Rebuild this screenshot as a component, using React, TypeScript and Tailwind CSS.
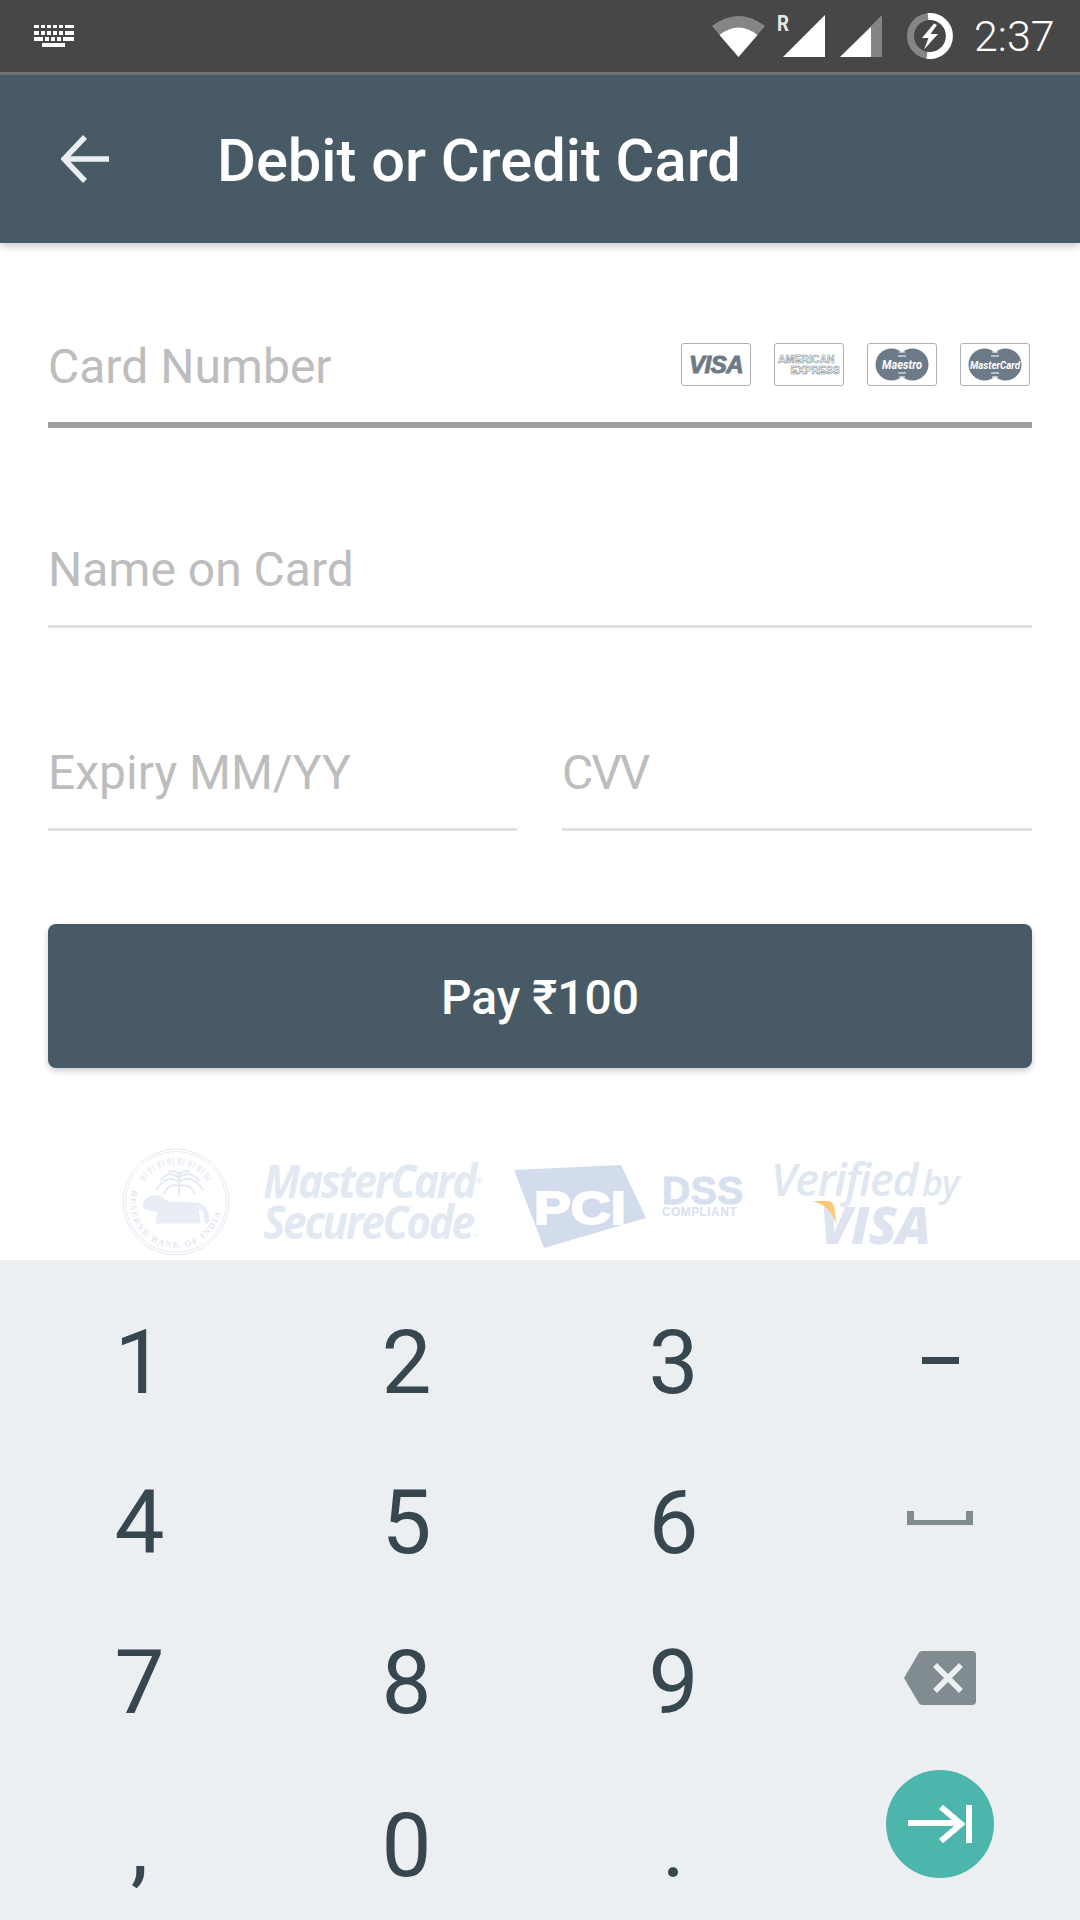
import React from "react";

const CardIcon = ({ children }: { children: React.ReactNode }) => (
  <div className="w-[70px] h-[43px] border border-[#aab1b8] rounded-[3px] flex items-center justify-center bg-white overflow-hidden">
    {children}
  </div>
);

const Circles = ({ label, size, len }: { label: string; size: number; len: number }) => (
  <svg width="54" height="33" viewBox="0 0 54 33">
    <circle cx="16.5" cy="16.5" r="16" fill="#6d7a87" />
    <circle cx="37.5" cy="16.5" r="16" fill="#6d7a87" />
    <path d="M24 4h6M23 8h8M23 25h8M24 29h6" stroke="#fff" strokeWidth="1" />
    <text x="27" y="21" textAnchor="middle" fontSize={size} textLength={len} lengthAdjust="spacingAndGlyphs" fontWeight="700" fontStyle="italic" fill="#fff" fontFamily="Roboto, sans-serif">{label}</text>
  </svg>
);

const Field = ({ label, className, line, text = "" }: { label: string; className: string; line: string; text?: string }) => (
  <div className={className}>
    <div className={`text-[48px] leading-[62px] text-[#bdbdbd] font-['Roboto',sans-serif] ${text}`}>{label}</div>
    <div className={line} />
  </div>
);

const Digit = ({ children, dy = "pt-[5px]" }: { children: React.ReactNode; dy?: string }) => (
  <div className={`flex items-center justify-center h-[160px] text-[89px] leading-none text-[#37474f] font-['Roboto',sans-serif] ${dy}`}>
    {children}
  </div>
);

export default function App() {
  return (
    <div className="w-[1080px] h-[1920px] bg-white flex flex-col overflow-hidden font-['Roboto',sans-serif]">
      {/* status bar */}
      <div className="h-[75px] shrink-0 bg-[#474747] border-b-[3px] border-[#757575] flex items-center pl-[33px] pr-[25px]">
        <svg width="42" height="22" viewBox="0 0 42 22" fill="#fff" className="mt-[-1px]">
          <path d="M1 0h5v3H1zM8 0h4v3H8zM14 0h4v3h-4zM20 0h4v3h-4zM26 0h4v3h-4zM32 0h9v3h-9z" />
          <path d="M1 6h5v4H1zM8 6h4v4H8zM14 6h4v4h-4zM20 6h4v4h-4zM26 6h4v4h-4zM32 6h9v4h-9z" />
          <path d="M1 12h9v4H1zM12 12h4v4h-4zM18 12h4v4h-4zM24 12h4v4h-4zM30 12h11v4H30z" />
          <path d="M9 18h23v4H9z" />
        </svg>
        <div className="flex-1" />
        <svg width="53" height="44" viewBox="0 0 53 44" className="mr-[18px]">
          <path d="M0 12 Q26.5 -8 53 12 L26.5 43Z" fill="#858585" />
          <path d="M7.5 21 Q26.5 6 45.5 21 L26.5 43Z" fill="#fff" />
        </svg>
        <div className="relative w-[42px] h-[42px] mr-[15px]">
          <span className="absolute left-[-6px] top-[-2px] text-[22px] leading-[22px] font-bold text-[#e8e8e8] scale-x-[0.85] origin-left">R</span>
          <svg width="42" height="42" viewBox="0 0 42 42"><path d="M42 0V42H0Z" fill="#fff" /></svg>
        </div>
        <svg width="42" height="42" viewBox="0 0 42 42" className="mr-[25px]">
          <path d="M42 0V42H0Z" fill="#858585" />
          <path d="M31 12V42H0Z" fill="#fff" />
        </svg>
        <svg width="46" height="46" viewBox="0 0 46 46" className="mr-[21px]">
          <circle cx="23" cy="23" r="19.5" fill="none" stroke="#858585" strokeWidth="7" />
          <path d="M21 3.6A19.5 19.5 0 1 1 20 42.3" fill="none" stroke="#fff" strokeWidth="7" />
          <path d="M27 10.5L15 25h6.5l-4.5 11.5L31 21h-7.5l6.5-9z" fill="#fff" />
        </svg>
        <span className="text-[43px] leading-none font-light text-white w-[81px]">2:37</span>
      </div>

      {/* app bar */}
      <div className="h-[168px] shrink-0 bg-[#475a65] flex items-center pl-[61px] shadow-[0_3px_8px_rgba(0,0,0,0.22)] relative">
        <svg width="48" height="48" viewBox="0 0 48 48" fill="none" stroke="#eceff1" strokeWidth="5.5" className="mr-[108px]">
          <path d="M48 24H4M24 2L3 24l21 22" />
        </svg>
        <span className="text-[59.6px] leading-none font-medium text-white pt-[6px]">Debit or Credit Card</span>
      </div>

      {/* form */}
      <div className="flex-1 px-[48px] pt-[93px]">
        <div className="relative">
          <Field label="Card Number" className="h-[92px]" line="h-[6px] bg-[#9e9e9e] mt-[24px]" />
          <div className="absolute right-[2px] top-[7px] flex gap-[23px]">
            <CardIcon>
              <span className="text-[24px] leading-none font-bold italic text-[#6d7a87] font-['Liberation_Sans',sans-serif] tracking-[-0.5px] [-webkit-text-stroke:1px_#6d7a87]">VISA</span>
            </CardIcon>
            <CardIcon>
              <div className="text-white [-webkit-text-stroke:0.5px_#6d7a87] text-[10.5px] leading-[11px] font-bold font-['Liberation_Sans',sans-serif] w-[62px]">
                <div className="text-left whitespace-nowrap">AMERICAN</div>
                <div className="text-right whitespace-nowrap">EXPRESS</div>
              </div>
            </CardIcon>
            <CardIcon><Circles label="Maestro" size={13} len={40} /></CardIcon>
            <CardIcon><Circles label="MasterCard" size={11} len={50} /></CardIcon>
          </div>
        </div>

        <Field label="Name on Card" className="mt-[111px]" line="h-[3px] bg-[#e0e0e0] mt-[24px]" />

        <div className="flex gap-[45px] mt-[114px]">
          <Field label="Expiry MM/YY" className="w-[469px] shrink-0" line="h-[3px] bg-[#e0e0e0] mt-[24px]" />
          <Field label="CVV" text="tracking-[-2px]" className="flex-1" line="h-[3px] bg-[#e0e0e0] mt-[24px]" />
        </div>

        <button className="mt-[93px] w-full h-[144px] rounded-[8px] bg-[#475a65] text-white text-[48px] font-medium flex items-center justify-center pt-[3px] shadow-[0_3px_6px_rgba(0,0,0,0.2)]">
          Pay ₹100
        </button>

        {/* trust logos */}
        <div className="mt-[80px] -mx-[48px] h-[112px] flex items-start pl-[122px]">
          <svg width="108" height="108" viewBox="0 0 108 108" fill="none" stroke="#e6ebf3" className="shrink-0">
            <circle cx="54" cy="54" r="53" strokeWidth="1" />
            <circle cx="54" cy="54" r="50.5" strokeWidth="1" />
            <defs><path id="rbiArc" d="M9.6 42A46 46 0 1 0 98.4 42" /></defs>
            <path d="M20 32A40 40 0 0 1 88 32" strokeWidth="7" strokeDasharray="4 1.5 2 3" stroke="#eef1f6" />
            <text fontSize="9" fontWeight="700" fill="#e2e7f0" stroke="none" fontFamily="'Liberation Serif', serif" letterSpacing="1.6">
              <textPath href="#rbiArc">RESERVE BANK OF INDIA</textPath>
            </text>
            <path d="M57 24v24M57 34C50 28 42 30 34 42M57 34C64 28 73 30 81 42M57 30C50 24 44 25 38 33M57 30C64 24 71 25 77 33M57 27C54 23 50 22 46 24M57 27C60 23 65 22 68 24M57 38C50 36 45 38 42 46M57 38C64 36 70 38 73 46" strokeWidth="2" />
            <path d="M21 58c1-9 11-13 18-9 3 2 5 5 8 5 10 1 22 0 30 2 7 2 11 8 9 19h-3l-1-11c-2-2-4-3-6-3l2 14H34l2-12c-5 0-13-1-15-5z" fill="#e9edf5" strokeWidth="1" />
            <path d="M28 55h6M50 60v10M56 60v10M62 60v10M68 60v10" strokeWidth="1.5" />
          </svg>
          <div className="ml-[33px] mt-[12px] w-[224px] shrink-0 font-['Open_Sans',sans-serif] italic font-bold text-[#e3e9f2] text-[46px] leading-[41px] tracking-[-2.5px] scale-x-[0.92] origin-left">
            <div>MasterCard<span className="text-[9px] not-italic align-top tracking-normal">®</span></div>
            <div>SecureCode<span className="text-[7px] not-italic tracking-normal">™</span></div>
          </div>
          <svg width="133" height="84" viewBox="0 0 133 84" className="ml-[27px] mt-[17px] shrink-0">
            <path d="M0 5L107 0l25 53L30 83Z" fill="#d2dcec" />
            <text x="20" y="59" fontSize="46" fontWeight="900" fill="#fff" fontFamily="'Liberation Sans', sans-serif" stroke="#fff" strokeWidth="2" textLength="92" lengthAdjust="spacingAndGlyphs">PCI</text>
          </svg>
          <div className="ml-[15px] mt-[26px] w-[80px] shrink-0 font-['Liberation_Sans',sans-serif] font-bold text-[#d7e0ee]">
            <div className="text-[39px] leading-[33px] tracking-[0.5px] [-webkit-text-stroke:1px_#d7e0ee]">DSS</div>
            <div className="text-[12px] leading-[10px] tracking-[0.4px]">COMPLIANT</div>
          </div>
          <div className="ml-[29px] mt-[9px] shrink-0 w-[190px] relative">
            <div className="font-['Open_Sans',sans-serif] italic font-semibold text-[#e0e7f1] text-[45px] leading-[43px] tracking-[-1.5px] whitespace-nowrap">Verified<span className="text-[36px] ml-[5px]">by</span></div>
            <div className="font-['Open_Sans',sans-serif] italic font-extrabold text-[#dde4ef] text-[52px] leading-[40px] tracking-[-1px] pl-[49px]">VISA</div>
            <svg width="24" height="26" viewBox="0 0 24 26" className="absolute left-[42px] top-[44px]">
              <path d="M0 0h15c3 0 5 2 6 5l3 20C20 10 12 4 0 0z" fill="#fcc875" />
            </svg>
          </div>
        </div>
      </div>

      {/* keypad */}
      <div className="h-[660px] shrink-0 bg-[#ebeff2] pt-[20px] px-[6px] grid grid-cols-4 auto-rows-[160px] relative">
        <Digit>1</Digit><Digit>2</Digit><Digit>3</Digit>
        <Digit dy=""><div className="w-[37px] h-[7px] bg-[#37474f] mt-[1px]" /></Digit>
        <Digit>4</Digit><Digit>5</Digit><Digit>6</Digit>
        <Digit dy="">
          <svg width="66" height="14" viewBox="0 0 66 14" className="mt-[-5px] ml-[-2px]" fill="#818c91"><path d="M0 0h7v9h52V0h7v14H0z" /></svg>
        </Digit>
        <Digit>7</Digit><Digit>8</Digit><Digit>9</Digit>
        <Digit dy="">
          <svg width="72" height="54" viewBox="0 0 72 54" className="mt-[-4px] ml-[-2px]">
            <path d="M18 0h50a4 4 0 0 1 4 4v46a4 4 0 0 1-4 4H18a4 4 0 0 1-3-1.5L0 27 15 1.5A4 4 0 0 1 18 0z" fill="#818c91" />
            <path d="M31 14l26 26M57 14L31 40" stroke="#ebeff2" strokeWidth="5.5" fill="none" />
          </svg>
        </Digit>
        <Digit dy="pt-[10px]">,</Digit>
        <Digit dy="pt-[10px]">0</Digit>
        <Digit dy="pt-[10px]">.</Digit>
        <div className="flex justify-center">
          <div className="w-[108px] h-[108px] rounded-full bg-[#4db6ac] flex items-center justify-center mt-[10px] ml-[-2px]">
            <svg width="64" height="38" viewBox="0 0 64 38" fill="none" stroke="#fff" strokeWidth="6">
              <path d="M0 18h52M33 2l20 17-20 17M61 0v38" />
            </svg>
          </div>
        </div>
      </div>
    </div>
  );
}
